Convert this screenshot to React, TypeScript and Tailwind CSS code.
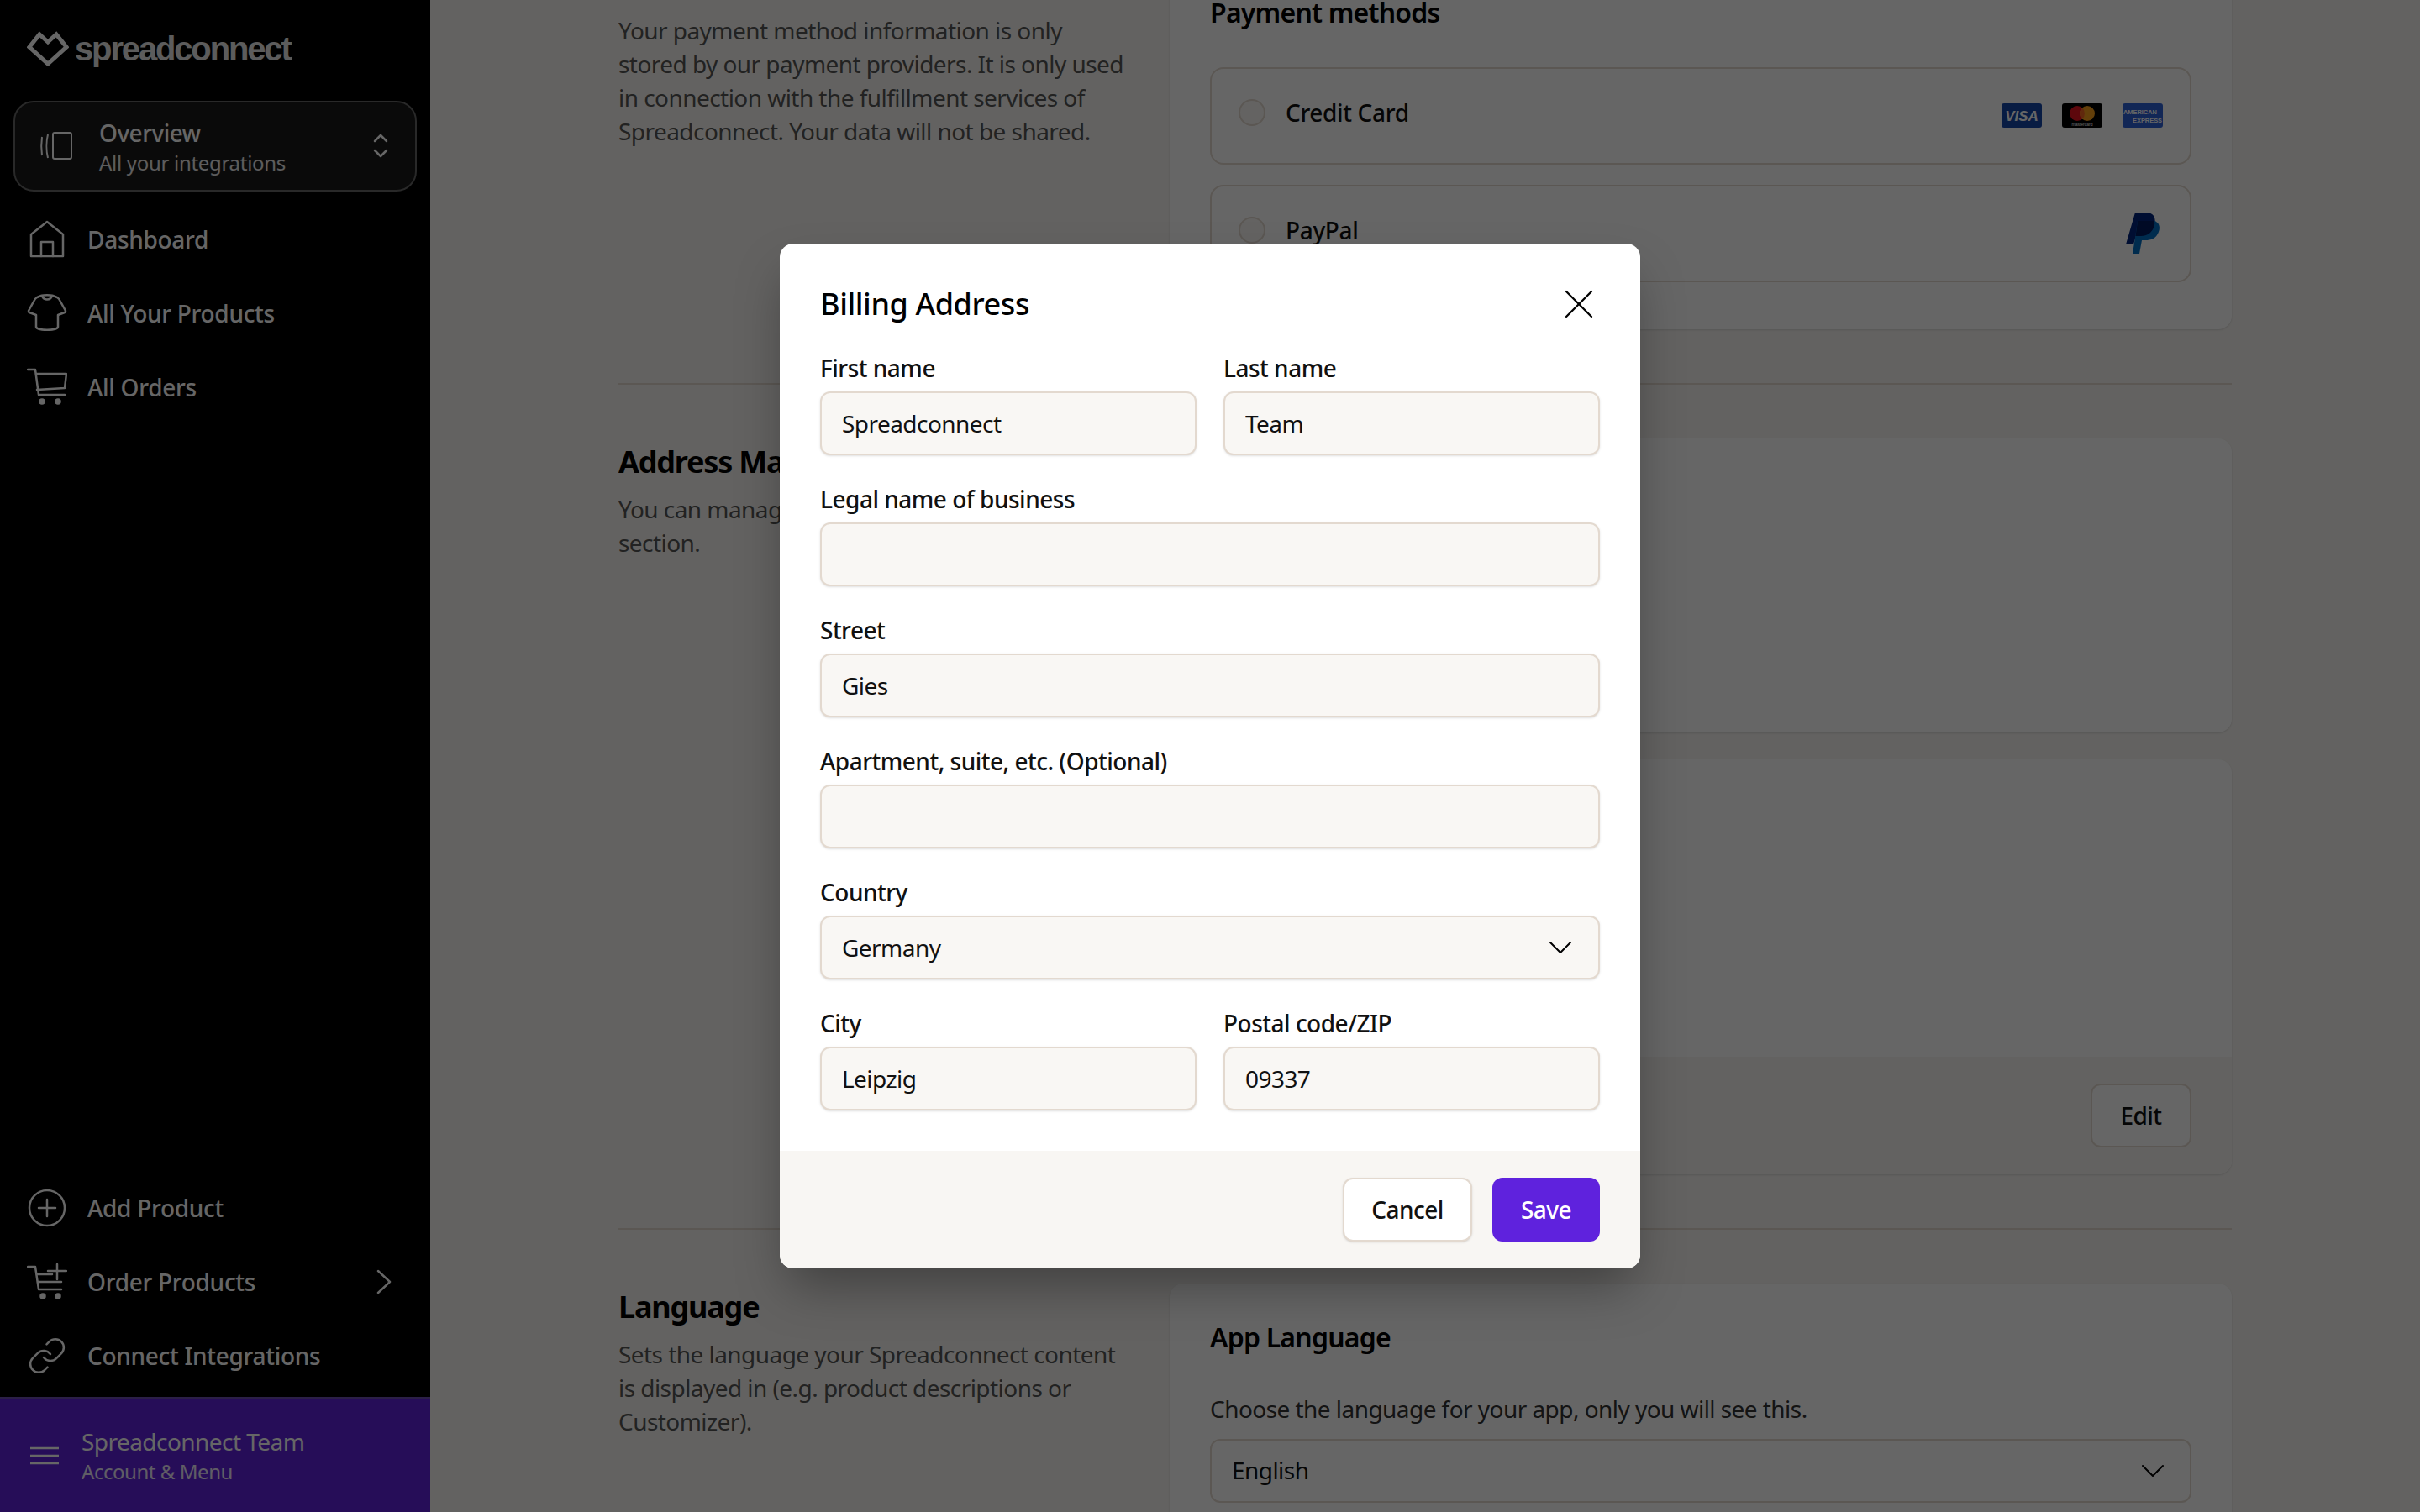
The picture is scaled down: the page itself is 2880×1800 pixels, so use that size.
import { X, ChevronDown } from 'lucide-react';

const font = { fontFamily: '"Noto Sans", sans-serif' };

function Field({ label, value, className }: { label: string; value?: string; className?: string }) {
  return (
    <label className={`block ${className ?? ''}`}>
      <span className="block h-10 mb-2 text-[28px] leading-10 font-medium tracking-[-0.5px] text-[#111]">{label}</span>
      <input
        readOnly
        defaultValue={value}
        className="block w-full h-[76px] px-[24px] rounded-xl border-2 border-[#e3d9cf] bg-[#f9f7f4] text-[28px] tracking-[-0.55px] text-[#111] shadow-sm outline-none"
      />
    </label>
  );
}

function NavItem({ icon, label, chevron }: { icon: React.ReactNode; label: string; chevron?: boolean }) {
  return (
    <div className="flex items-center h-[88px] pl-[32px] pr-[46px]">
      <span className="w-12 h-12 mr-[24px] shrink-0">{icon}</span>
      <span className="flex-1 text-[28px] leading-10 font-medium tracking-[-0.3px] text-white">{label}</span>
      {chevron && (
        <svg width="18" height="30" viewBox="0 0 18 30" fill="none" stroke="white" strokeWidth="2.5">
          <path d="M2 2 L16 15 L2 28" strokeLinecap="round" strokeLinejoin="round" />
        </svg>
      )}
    </div>
  );
}

const stroke = { fill: 'none', stroke: 'white', strokeWidth: 2.5, strokeLinecap: 'round', strokeLinejoin: 'round' } as const;

const HomeIcon = (
  <svg viewBox="0 0 48 48" className="w-12 h-12" {...stroke}>
    <path d="M5 44 V18 L24 3 L43 18 V44 Z" />
    <path d="M17 44 V27 H31 V44" />
  </svg>
);
const ShirtIcon = (
  <svg viewBox="0 0 48 48" className="w-12 h-12" {...stroke}>
    <path d="M17 3 C20 2 28 2 31 3 L36 5 C38 6 39 8 40 10 L46 21 C46 22 46 23 45 23 L37 26 V40 C37 45 11 45 11 40 V26 L3 23 C2 23 2 22 2 21 L8 10 C9 8 10 6 12 5 Z" />
    <path d="M18 3 C20 9 28 9 30 3" />
  </svg>
);
const CartIcon = (
  <svg viewBox="0 0 48 48" className="w-12 h-12" {...stroke}>
    <path d="M1 3 H10 L14 33 H45" />
    <path d="M11 8 H47 L45 25 L12 27" />
    <circle cx="18" cy="41" r="2.5" fill="white" />
    <circle cx="37" cy="41" r="2.5" fill="white" />
  </svg>
);
const AddIcon = (
  <svg viewBox="0 0 48 48" className="w-12 h-12" {...stroke}>
    <circle cx="24" cy="24" r="21" />
    <path d="M14 24 H34 M24 14 V34" />
  </svg>
);
const OrderIcon = (
  <svg viewBox="0 0 48 48" className="w-12 h-12" {...stroke}>
    <path d="M1 6 H10 L14 33 H41" />
    <path d="M12 15 H30 M13 24 H41" />
    <path d="M25 11 H47 M36 3 V21" />
    <circle cx="19" cy="41" r="2.5" fill="white" />
    <circle cx="37" cy="41" r="2.5" fill="white" />
  </svg>
);
const LinkIcon = (
  <svg viewBox="0 0 24 24" className="w-12 h-12" fill="none" stroke="white" strokeWidth="1.25" strokeLinecap="round" strokeLinejoin="round">
    <path d="M10 13a5 5 0 0 0 7.54.54l3-3a5 5 0 0 0-7.07-7.07l-1.72 1.71" />
    <path d="M14 11a5 5 0 0 0-7.54-.54l-3 3a5 5 0 0 0 7.07 7.07l1.71-1.71" />
  </svg>
);

function Sidebar() {
  return (
    <aside className="flex flex-col w-[512px] h-full shrink-0 bg-black">
      <div className="flex items-center h-[120px] pl-[32px] pb-[4px]">
        <svg width="50" height="42" viewBox="0 0 50 42" fill="none" stroke="white" strokeWidth="5" className="mr-[7px]">
          <path d="M3 19 L15 4 L25 13 L35 4 L47 19 L25 39 Z" strokeLinejoin="miter" />
        </svg>
        <span className="text-[40px] font-bold tracking-[-2.15px] text-white/90" style={{ fontFamily: '"Liberation Sans", sans-serif' }}>
          spreadconnect
        </span>
      </div>
      <div className="flex items-center h-[108px] mx-[16px] pl-[29px] pr-[32px] rounded-3xl border-2 border-[#666] bg-[#1a1a1a]">
        <svg width="40" height="40" viewBox="0 0 40 40" fill="none" stroke="white" strokeWidth="2" className="mr-[31px]">
          <rect x="16" y="4" width="22" height="31" rx="2" />
          <path d="M10 6 C8 14 8 26 10 34" />
          <path d="M3 9 C2 16 2 24 3 31" />
        </svg>
        <div className="flex-1 pt-[3px]">
          <div className="text-[28px] leading-9 font-medium text-white">Overview</div>
          <div className="text-[24px] leading-9 tracking-[-0.3px] text-white/90">All your integrations</div>
        </div>
        <svg width="18" height="30" viewBox="0 0 18 30" fill="none" stroke="white" strokeWidth="2.5" strokeLinecap="round" strokeLinejoin="round">
          <path d="M2 9 L9 2 L16 9" />
          <path d="M2 20 L9 27 L16 20" />
        </svg>
      </div>
      <nav className="mt-[13px]">
        <NavItem icon={HomeIcon} label="Dashboard" />
        <NavItem icon={ShirtIcon} label="All Your Products" />
        <NavItem icon={CartIcon} label="All Orders" />
      </nav>
      <div className="flex-1" />
      <nav className="mb-[5px]">
        <NavItem icon={AddIcon} label="Add Product" />
        <NavItem icon={OrderIcon} label="Order Products" chevron />
        <NavItem icon={LinkIcon} label="Connect Integrations" />
      </nav>
      <div className="flex items-center h-[137px] pl-[36px] border-t-2 border-[#6b4fb0] bg-[#5f22dd]">
        <svg width="34" height="22" viewBox="0 0 34 22" stroke="white" strokeWidth="2.5" className="mr-[27px]">
          <path d="M0 2 H34 M0 11 H34 M0 20 H34" />
        </svg>
        <div className="pt-[2px]">
          <div className="text-[28px] leading-9 text-white">Spreadconnect Team</div>
          <div className="text-[24px] leading-9 tracking-[-0.45px] text-white/90">Account &amp; Menu</div>
        </div>
      </div>
    </aside>
  );
}

function CardBrands() {
  return (
    <div className="flex gap-[24px] tracking-normal">
      <svg width="48" height="29" viewBox="0 0 48 29">
        <rect width="48" height="29" rx="3" fill="#1646a8" />
        <text x="24" y="21" textAnchor="middle" fontSize="17" fontWeight="700" fontStyle="italic" fill="#fff" fontFamily="Liberation Sans">VISA</text>
      </svg>
      <svg width="48" height="29" viewBox="0 0 48 29">
        <rect width="48" height="29" rx="3" fill="#000" />
        <circle cx="18" cy="12" r="9" fill="#e8121f" />
        <circle cx="30" cy="12" r="9" fill="#f79e1b" />
        <path d="M24 5.3 a9 9 0 0 1 0 13.4 a9 9 0 0 1 0 -13.4 Z" fill="#f26522" />
        <text x="24" y="27" textAnchor="middle" fontSize="5" fill="#fff" fontFamily="Liberation Sans">mastercard</text>
      </svg>
      <svg width="48" height="29" viewBox="0 0 48 29">
        <rect width="48" height="29" rx="3" fill="#2f62d8" />
        <text x="1" y="13" fontSize="7.4" fontWeight="700" fill="#fff" fontFamily="Liberation Sans">AMERICAN</text>
        <text x="47" y="23" textAnchor="end" fontSize="7.4" fontWeight="700" fill="#fff" fontFamily="Liberation Sans">EXPRESS</text>
      </svg>
    </div>
  );
}

function PayPalLogo() {
  return (
    <svg width="40" height="50" viewBox="0 0 40 50">
      <path d="M11 0 H24 C34 0 36 8 34 15 C32 24 25 28 18 28 H12 L9 38 H0 Z" fill="#00247d" />
      <path d="M14 10 H34 C40 12 41 18 39 23 C36 31 30 33 23 33 H19 L16 49 H8 L14 10 Z" fill="#006fc4" />
      <path d="M14 10 H34 C34 12 34.5 13 34 15 C32 24 25 28 18 28 H11.5 L14 10 Z" fill="#001a5e" />
    </svg>
  );
}

function PayOption({ label, right }: { label: string; right: React.ReactNode }) {
  return (
    <div className="flex items-start h-[116px] pl-[32px] pr-[32px] pt-[34px] rounded-2xl border-2 border-[#e3d9cf] mb-[24px] last:mb-0">
      <span className="w-8 h-8 mt-[2px] mr-[24px] rounded-full border-2 border-[#e3d9cf] bg-[#f9f7f4]" />
      <span className="flex-1 text-[28px] leading-9 font-medium tracking-[-0.35px] text-[#111]">{label}</span>
      {right}
    </div>
  );
}

function SectionText({ title, children }: { title?: string; children: React.ReactNode }) {
  return (
    <div>
      {title ? (
        <h2 className="text-[36px] leading-[56px] font-bold tracking-[-1.2px] text-black mb-2">{title}</h2>
      ) : (
        <div className="h-[56px] mb-2" />
      )}
      <p className="text-[28px] leading-10 tracking-[-0.55px] text-[#555]">{children}</p>
    </div>
  );
}

function Page() {
  return (
    <main className="flex-1 h-full overflow-hidden bg-[#f8f6f3] pl-[224px] pr-[224px]">
      <div className="-mt-[48px]">
        <section className="grid grid-cols-[656px_1264px]">
          <SectionText>
            Your payment method information is only<br />
            stored by our payment providers. It is only used<br />
            in connection with the fulfillment services of<br />
            Spreadconnect. Your data will not be shared.
          </SectionText>
          <div className="px-[48px] pt-[40px] pb-[56px] rounded-2xl bg-white shadow-sm">
            <h3 className="text-[32px] leading-[48px] font-semibold tracking-[-0.8px] text-black -mt-[1px] mb-[41px]">Payment methods</h3>
            <PayOption label="Credit Card" right={<div className="mt-[7px]"><CardBrands /></div>} />
            <PayOption label="PayPal" right={<div className="-mt-[3px] mr-[4px]"><PayPalLogo /></div>} />
          </div>
        </section>
        <hr className="my-[64px] border-t-2 border-[#e3d9cf]" />
        <section className="grid grid-cols-[656px_1264px]">
          <SectionText title="Address Management">
            You can manage your addresses in this<br />section.
          </SectionText>
          <div className="flex flex-col gap-[32px]">
            <div className="h-[350px] rounded-2xl bg-white shadow-sm" />
            <div className="flex flex-col h-[494px] rounded-2xl bg-white shadow-sm overflow-hidden">
              <div className="flex-1" />
              <div className="flex justify-end items-center h-[140px] px-[48px] bg-[#f8f6f3]">
                <button className="w-[120px] h-[76px] rounded-xl border-2 border-[#e3d9cf] bg-white text-[28px] font-medium text-[#111]">Edit</button>
              </div>
            </div>
          </div>
        </section>
        <hr className="my-[64px] border-t-2 border-[#e3d9cf]" />
        <section className="grid grid-cols-[656px_1264px]">
          <SectionText title="Language">
            Sets the language your Spreadconnect content<br />
            is displayed in (e.g. product descriptions or<br />
            Customizer).
          </SectionText>
          <div className="px-[48px] pt-[40px] h-[400px] rounded-2xl bg-white shadow-sm">
            <h3 className="text-[32px] leading-[48px] font-semibold tracking-[-0.8px] text-black mb-[41px]">App Language</h3>
            <p className="text-[28px] leading-10 tracking-[-0.55px] text-[#333] mb-[16px]">Choose the language for your app, only you will see this.</p>
            <div className="flex items-center justify-between h-[76px] px-[24px] rounded-xl border-2 border-[#e3d9cf] bg-white">
              <span className="text-[28px] tracking-[-0.55px] text-[#111] -mt-[2px]">English</span>
              <ChevronDown className="w-12 h-12 -mr-[4px] text-black" strokeWidth={1} />
            </div>
          </div>
        </section>
      </div>
    </main>
  );
}

function BillingModal() {
  return (
    <div className="absolute inset-0 flex items-center justify-center bg-black/60">
      <div className="w-[1024px] rounded-2xl bg-white overflow-hidden shadow-[0_30px_60px_-10px_rgba(0,0,0,0.35)]">
        <div className="px-[48px] pt-[48px] pb-[48px]">
          <div className="flex items-center justify-between h-12 mb-[32px]">
            <h2 className="text-[36px] leading-[48px] font-medium tracking-[-0.4px] text-black">Billing Address</h2>
            <X className="w-[60px] h-[60px] -mr-[5px] text-black" strokeWidth={0.9} />
          </div>
          <div className="grid grid-cols-2 gap-x-[32px] gap-y-[32px]">
            <Field label="First name" value="Spreadconnect" />
            <Field label="Last name" value="Team" />
            <Field className="col-span-2" label="Legal name of business" />
            <Field className="col-span-2" label="Street" value="Gies" />
            <Field className="col-span-2" label="Apartment, suite, etc. (Optional)" />
            <div className="col-span-2">
              <span className="block h-10 mb-2 text-[28px] leading-10 font-medium tracking-[-0.5px] text-[#111]">Country</span>
              <div className="flex items-center justify-between h-[76px] px-[24px] rounded-xl border-2 border-[#e3d9cf] bg-[#f9f7f4] shadow-sm">
                <span className="text-[28px] tracking-[-0.55px] text-[#111]">Germany</span>
                <ChevronDown className="w-12 h-12 -mr-[3px] text-black" strokeWidth={1} />
              </div>
            </div>
            <Field label="City" value="Leipzig" />
            <Field label="Postal code/ZIP" value="09337" />
          </div>
        </div>
        <div className="flex justify-end gap-[24px] h-[140px] px-[48px] py-[32px] bg-[#f8f6f3]">
          <button className="w-[154px] rounded-xl border-2 border-[#e3d9cf] bg-white text-[28px] font-medium text-[#111] shadow-sm">Cancel</button>
          <button className="w-[128px] rounded-xl bg-[#5f22dd] text-[28px] font-medium text-white">Save</button>
        </div>
      </div>
    </div>
  );
}

export default function App() {
  return (
    <div className="relative flex w-[2880px] h-[1800px] overflow-hidden tracking-[-0.55px]" style={font}>
      <Sidebar />
      <Page />
      <BillingModal />
    </div>
  );
}
